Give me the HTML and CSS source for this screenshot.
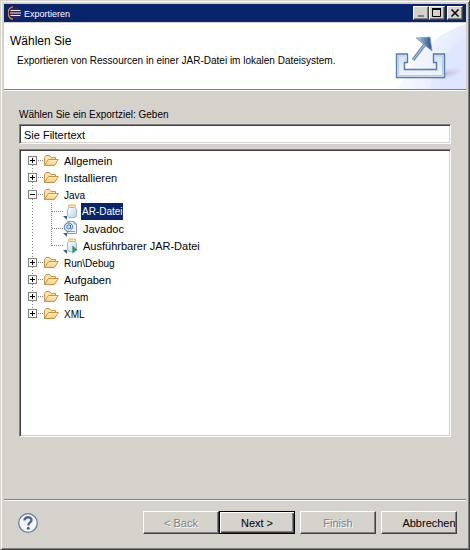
FILE: index.html
```html
<!DOCTYPE html>
<html lang="de">
<head>
<meta charset="utf-8">
<title>Exportieren</title>
<link rel="stylesheet" href="styles.css">
</head>
<body>
<svg width="0" height="0" class="defs" aria-hidden="true">
  <defs>
    <linearGradient id="gold" x1="0" y1="0" x2="0" y2="1"><stop offset="0" stop-color="#fff3c4"/><stop offset="1" stop-color="#f7ca78"/></linearGradient>
    <linearGradient id="glass" x1="0" y1="0" x2="1" y2="1"><stop offset="0" stop-color="#ffffff"/><stop offset="1" stop-color="#b9d0ee"/></linearGradient>
    <symbol id="folder" viewBox="0 0 16 16">
      <path d="M1.5 12.5V4.5L3 2.5H6.5L8 4.5H12.5V7" fill="#fbe3a8" stroke="#c99244"/>
      <path d="M1.5 12.5L5.5 6.5H15.3L11.5 12.5Z" fill="url(#gold)" stroke="#c99244" stroke-linejoin="round"/>
    </symbol>
    <symbol id="jar" viewBox="0 0 16 16">
      <path d="M6.5 3.5C4.5 4.500 4.500 5.500 4.500 7V10.500C4.500 13 5.500 13.500 7 13.500H11C12.500 13.500 13.500 13 13.500 10.500V7C13.500 5.500 13.500 4.500 11.500 3.500Z" fill="url(#glass)" stroke="#9db5da"/>
      <rect x="5.500" y="1" width="7" height="2.500" rx="1" fill="#ffe9ae" stroke="#dcae55"/>
      <path d="M0 12H4V16Z" fill="#2d6197"/>
    </symbol>
    <symbol id="run" viewBox="0 0 16 16">
      <path d="M9 7L15 11.500L9 16Z" fill="#319b5c" stroke="#fff" stroke-width=".5"/>
    </symbol>
    <symbol id="javadoc" viewBox="0 0 16 16">
      <path d="M4.500 .5H11L13.500 3V12.500H4.500Z" fill="#eef3fc" stroke="#899cc0"/>
      <path d="M11 .5V3H13.500M8 10.500H12" fill="none" stroke="#899cc0"/>
      <circle cx="5.500" cy="6" r="4.800" fill="#d5e6f7"/>
      <path d="M8 9.800A4.300 4.300 0 1 1 9.800 6C9.800 8.200 7.500 8.500 7.500 7V4M7.500 5.500A1.900 1.900 0 1 0 5.500 7.800Q7 7.800 7.500 6" fill="none" stroke="#3b6fa8" stroke-width=".9"/>
      <path d="M0 12H4V16Z" fill="#2d6197"/>
    </symbol>
  </defs>
</svg>
<main class="window">
  <header class="titlebar">
    <svg class="logo" viewBox="0 0 14 14" aria-hidden="true">
      <circle cx="7.500" cy="7" r="6" fill="#34245e"/>
      <path d="M5 .7A6.500 6.500 0 0 0 5 13.300" fill="none" stroke="#ed8b22" stroke-width="1.300"/>
      <path d="M2.500 4.500H12.500M2 7H13M2.500 9.500H12.500" stroke="#eeeafa" stroke-width="1.200"/>
    </svg>
    <span class="title">Exportieren</span>
    <button class="caption" type="button" aria-label="Minimieren"><svg viewBox="0 0 12 10"><path d="M3 8H9" stroke="#808080" stroke-width="2"/></svg></button>
    <button class="caption" type="button" aria-label="Maximieren"><svg viewBox="0 0 12 10"><path d="M1.500 1V8.500H9.500V1" fill="none" stroke="#000"/><path d="M1 1H10" stroke="#000" stroke-width="2"/></svg></button>
    <button class="caption close" type="button" aria-label="Schließen"><svg viewBox="0 0 12 10"><path d="M2.500 1.500L9.500 8.500M9.500 1.500L2.500 8.500" stroke="#000" stroke-width="1.500"/></svg></button>
  </header>
  <section class="banner">
    <div class="intro">
      <h1>Wählen Sie</h1>
      <p>Exportieren von Ressourcen in einer JAR-Datei im lokalen Dateisystem.</p>
    </div>
    <svg class="art" viewBox="0 0 76 66" aria-hidden="true">
      <defs>
        <linearGradient id="sky" x1="0" y1="0" x2="1" y2=".3"><stop offset="0" stop-color="#fff"/><stop offset="1" stop-color="#e2e9fd"/></linearGradient>
        <linearGradient id="tray" x1="0" y1="0" x2="0" y2="1"><stop offset="0" stop-color="#d9e2f1"/><stop offset="1" stop-color="#f2f5fb"/></linearGradient>
        <linearGradient id="arrow" x1="0" y1="0" x2="1" y2="0"><stop offset="0" stop-color="#b9d8ee"/><stop offset="1" stop-color="#244a86"/></linearGradient>
        <radialGradient id="shade"><stop offset="0" stop-color="#a99bb0" stop-opacity=".6"/><stop offset="1" stop-color="#cfc8dc" stop-opacity="0"/></radialGradient>
      </defs>
      <path d="M76 1C48 10 22 29 8 66H76Z" fill="url(#sky)"/>
      <path d="M76 14C57 25 45 43 40 66H76Z" fill="#d7e2ff" opacity=".45"/>
      <ellipse cx="55" cy="51" rx="20" ry="6" fill="url(#shade)" transform="rotate(-12 55 51)"/>
      <path d="M6.500 31H17.500V39.500H14.500V46.500H46.500V39.500H43.500V31H54.500V54.500H6.500Z" fill="url(#tray)" stroke="#507bb3" stroke-width="1.400"/>
      <path d="M8.500 33H15M8.500 33V52.500H52.500V33H46" fill="none" stroke="#b8cbe6"/>
      <path d="M23 37L36 20" stroke="#6b8fbd" stroke-width="3.400"/>
      <path d="M23 37L36 20" stroke="#b4c9e4" stroke-width="1"/>
      <path d="M26 15L40 14L42 28Z" fill="url(#arrow)" stroke="#7c9fc6" stroke-width=".8"/>
    </svg>
  </section>
  <section class="content">
    <label for="filter">Wählen Sie ein Exportziel: Geben</label>
    <input id="filter" type="text" value="Sie Filtertext">
    <div class="tree">
      <ul class="roots">
        <li><div class="row"><button class="toggle plus" type="button" aria-label="Aufklappen"></button><i></i><svg class="icon"><use href="#folder"/></svg><span>Allgemein</span></div></li>
        <li><div class="row"><button class="toggle plus" type="button" aria-label="Aufklappen"></button><i></i><svg class="icon"><use href="#folder"/></svg><span>Installieren</span></div></li>
        <li><div class="row"><button class="toggle" type="button" aria-label="Zuklappen"></button><i></i><svg class="icon"><use href="#folder"/></svg><span class="small">Java</span></div>
          <ul class="children">
            <li class="row"><i></i><svg class="icon"><use href="#jar"/></svg><span class="small selected">AR-Datei</span></li>
            <li class="row"><i></i><svg class="icon"><use href="#javadoc"/></svg><span>Javadoc</span></li>
            <li class="row"><i></i><svg class="icon"><use href="#jar"/><use href="#run"/></svg><span>Ausführbarer JAR-Datei</span></li>
          </ul>
        </li>
        <li><div class="row"><button class="toggle plus" type="button" aria-label="Aufklappen"></button><i></i><svg class="icon"><use href="#folder"/></svg><span class="small">Run\Debug</span></div></li>
        <li><div class="row"><button class="toggle plus" type="button" aria-label="Aufklappen"></button><i></i><svg class="icon"><use href="#folder"/></svg><span>Aufgaben</span></div></li>
        <li><div class="row"><button class="toggle plus" type="button" aria-label="Aufklappen"></button><i></i><svg class="icon"><use href="#folder"/></svg><span class="small">Team</span></div></li>
        <li><div class="row"><button class="toggle plus" type="button" aria-label="Aufklappen"></button><i></i><svg class="icon"><use href="#folder"/></svg><span class="small">XML</span></div></li>
      </ul>
    </div>
  </section>
  <footer class="actions">
    <button class="help" type="button" aria-label="Hilfe"><svg viewBox="0 0 20 20"><circle cx="10" cy="10" r="9.300" fill="#f5f6fa" stroke="#6c7da2" stroke-width="1.300"/><path d="M6.500 7.500C6.500 3 13.700 3.300 13.500 7.200C13.400 9.500 10.300 9.300 10.300 12.500" fill="none" stroke="#52658f" stroke-width="2.400"/><circle cx="10.300" cy="15.300" r="1.500" fill="#52658f"/></svg></button>
    <div class="pair">
      <button class="push" type="button" disabled>&lt; Back</button>
      <button class="push default" type="button">Next &gt;</button>
    </div>
    <button class="push" type="button" disabled>Finish</button>
    <button class="push cancel" type="button">Abbrechen</button>
  </footer>
</main>
</body>
</html>
```
FILE: styles.css
```css
* { box-sizing: border-box; }
body {
  margin: 0;
  font: 11px/16px "Liberation Sans", Arial, sans-serif;
  color: #000;
  background: #d5d2cc;
}
.defs { position: absolute; }
h1, p, ul { margin: 0; padding: 0; }
ul { list-style: none; }
button, input { font: inherit; color: inherit; padding: 0; margin: 0; }
button { background: #d5d2cc; }
.window {
  min-height: 100vh;
  display: flex;
  flex-direction: column;
  padding: 2px;
  border: 1px solid;
  border-color: #d5d2cc #404040 #404040 #d5d2cc;
  box-shadow: inset 1px 1px #fff, inset -1px -1px #808080;
}
.titlebar {
  display: flex;
  align-items: center;
  height: 19px;
  margin: 1px 1px 0;
  padding: 0 3px 0 4px;
  background: #08246b;
  border-bottom: 1px solid #d5d2cc;
}
.logo { width: 14px; height: 14px; }
.title { flex: 1; padding-left: 2px; padding-top: 2px; font-size: 9px; color: #fff; }
.caption {
  width: 16px;
  height: 14px;
  border: 1px solid;
  border-color: #fff #404040 #404040 #fff;
  box-shadow: inset -1px -1px #808080;
}
.caption svg { display: block; width: 12px; height: 10px; margin-left: 1px; }
.caption.close { margin-left: 2px; }
.banner {
  display: flex;
  justify-content: space-between;
  margin: 0 1px;
  background: #fff;
  border-bottom: 1px solid #808080;
  box-shadow: 0 1px #fff;
}
.intro { flex: 1; padding: 10px 0 0 6px; white-space: nowrap; }
h1 { font-size: 12px; font-weight: 400; line-height: 16px; }
.intro p { padding: 4px 0 0 7px; font-size: 10px; }
.art { width: 76px; height: 66px; flex: none; }
.content {
  flex: 1;
  display: flex;
  flex-direction: column;
  margin: 0 1px;
  padding: 17px 15px 62px;
}
.content label { margin-bottom: 1px; font-size: 10px; }
#filter {
  height: 20px;
  padding: 2px 4px 0;
  outline: 0;
  background: #fff;
}
#filter, .tree {
  border: 1px solid;
  border-color: #808080 #fff #fff #808080;
  box-shadow: inset 1px 1px #404040, inset -1px -1px #d5d2cc;
}
.tree { flex: 1; margin-top: 5px; padding: 2px 8px; background: #fff; }
.roots > li { position: relative; }
.roots > li:not(:last-child)::before {
  content: "";
  position: absolute;
  left: 4px;
  top: 13px;
  bottom: -4px;
  width: 1px;
  background: repeating-linear-gradient(#808080 0 1px, transparent 1px 3px);
}
.row { display: flex; align-items: center; height: 17px; }
.row i { height: 1px; width: 6px; background: repeating-linear-gradient(90deg, transparent 0 1px, #808080 1px 2px); }
.icon { width: 16px; height: 16px; flex: none; }
.row span { line-height: 17px; padding: 1px 0 0 5px; white-space: nowrap; }
.row .small { font-size: 10px; }
.toggle {
  width: 9px;
  height: 9px;
  border: 1px solid #808080;
  background: linear-gradient(#000, #000) center / 5px 1px no-repeat #fff;
}
.toggle.plus {
  background: linear-gradient(#000, #000) center / 5px 1px no-repeat, linear-gradient(#000, #000) center / 1px 5px no-repeat, #fff;
}
.children { position: relative; margin-left: 23px; }
.children::before {
  content: "";
  position: absolute;
  left: 0;
  top: 0;
  height: 43px;
  width: 1px;
  background: repeating-linear-gradient(#808080 0 1px, transparent 1px 2px);
}
.children i { width: 12px; }
.children span { padding-left: 4px; }
.children .selected {
  margin-left: 2px;
  padding: 0 0 0 1px;
  color: #fff;
  background: #08246b;
}
.actions {
  display: flex;
  align-items: center;
  gap: 5px;
  margin: 0 1px;
  padding: 11px 9px 13px 14px;
  border-top: 1px solid #808080;
  box-shadow: inset 0 1px #fff;
}
.help { width: 20px; height: 20px; margin-right: auto; border: 0; background: none; }
.help svg { display: block; width: 20px; height: 20px; }
.pair { display: flex; }
.push {
  width: 76px;
  height: 23px;
  border: 1px solid;
  border-color: #fff #404040 #404040 #fff;
  box-shadow: inset -1px -1px #808080;
}
.push:disabled { color: #808080; text-shadow: 1px 1px #fff; }
.push.default { border-color: #000; box-shadow: inset 1px 1px #fff, inset -1px -1px #404040, inset -2px -2px #808080; }
.push.cancel { padding-left: 20px; }
```
